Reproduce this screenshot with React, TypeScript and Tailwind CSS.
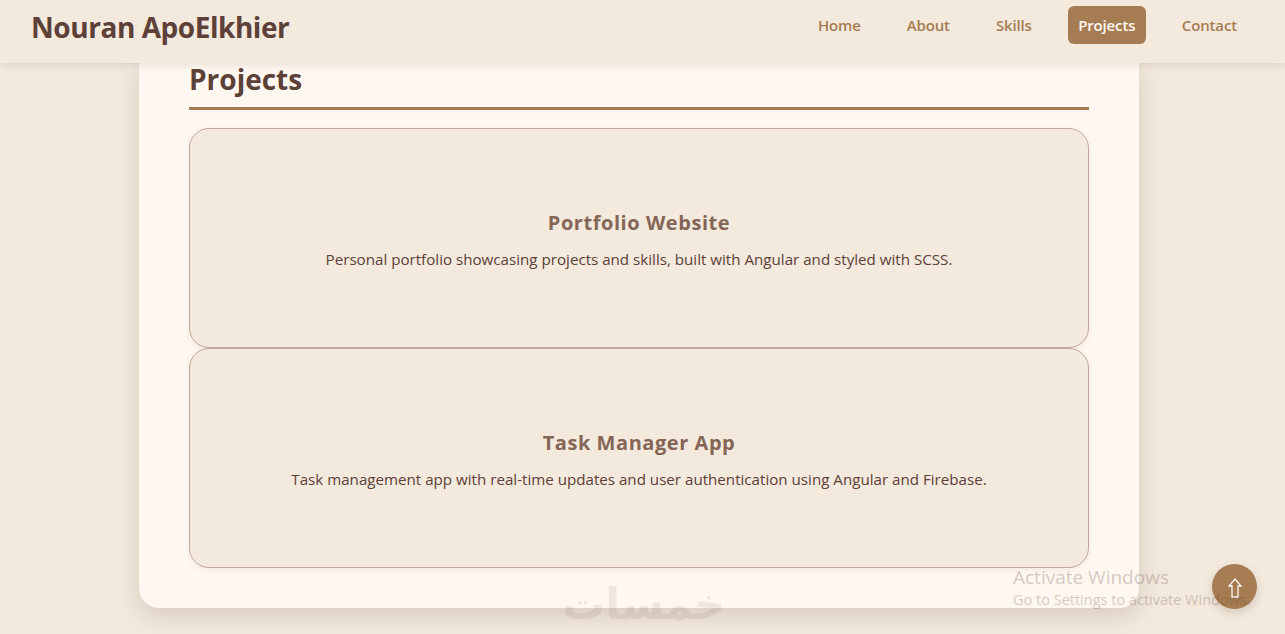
const links = ["Home", "About", "Skills", "Projects", "Contact"];

const projects = [
  {
    title: "Portfolio Website",
    text: "Personal portfolio showcasing projects and skills, built with Angular and styled with SCSS.",
  },
  {
    title: "Task Manager App",
    text: "Task management app with real-time updates and user authentication using Angular and Firebase.",
  },
];

export default function App() {
  return (
    <div className="relative flex h-[634px] flex-col overflow-hidden bg-[#f3e9dd] font-['Open_Sans','Noto_Sans',sans-serif] text-[#5d4037]">
      <nav className="relative z-10 flex h-[63px] shrink-0 items-start justify-between bg-[#f3e9dd] pl-[31px] pr-[38px] shadow-[0_2px_8px_rgba(93,64,55,0.15)]">
        <h1 className="mt-[11px] text-[28px] font-bold leading-[32px] tracking-[-0.45px]">Nouran ApoElkhier</h1>
        <ul className="mt-[6px] flex gap-[26px]">
          {links.map((link) => (
            <li key={link}>
              <a
                className={
                  link === "Projects"
                    ? "block h-[38px] rounded-md bg-[#a67c52] px-[10.5px] text-[15px] font-semibold leading-[38px] tracking-[-0.15px] text-[#fff8f1]"
                    : "block h-[38px] rounded-md px-[10px] text-[15px] font-semibold leading-[38px] tracking-[-0.15px] text-[#a67c52]"
                }
              >
                {link}
              </a>
            </li>
          ))}
        </ul>
      </nav>

      <main className="ml-[139px] h-[545px] w-[1000px] shrink-0 rounded-b-[20px] bg-[#fff8f1] px-[50px] shadow-[0_8px_24px_rgba(93,64,55,0.18)]">
        <h2 className="h-[47px] border-b-[3px] border-[#a67c52] text-[28px] font-bold leading-[32px]">
          Projects
        </h2>
        <div className="mt-[18px] flex flex-col">
          {projects.map((project) => (
            <section
              key={project.title}
              className="flex h-[220px] flex-col items-center justify-center rounded-[20px] border border-[#c4a79b] bg-[#f3e9dd] pt-[4px] shadow-[0_2px_6px_rgba(93,64,55,0.08)]"
            >
              <h3 className="text-[20px] font-bold leading-[28px] tracking-[0.55px] text-[#856656]">{project.title}</h3>
              <p className="mt-[10px] text-[15.15px] leading-[24px]">{project.text}</p>
            </section>
          ))}
        </div>
      </main>

      <div className="absolute left-[562px] top-[574px] z-20 font-['DejaVu_Sans',sans-serif] text-[43px] font-bold leading-[60px] text-[#5d4037] opacity-[0.09]" dir="rtl">
        خمسات
      </div>

      <button className="absolute left-[1212px] top-[564px] flex h-[45px] w-[45px] items-center justify-center rounded-full bg-[#a67c52] text-[#fff8f1] shadow-[0_4px_10px_rgba(93,64,55,0.2)]">
        <svg width="14" height="20" viewBox="0 0 14 20" fill="none" stroke="currentColor" strokeWidth="1.3" className="mt-[3px]">
          <path d="M7 1 L13 8 H10 V19 H4 V8 H1 Z" />
        </svg>
      </button>

      <div className="absolute left-[1013px] top-[565px] z-30 text-[#5d4037] opacity-[0.25]">
        <p className="text-[19px] leading-[24px]">Activate Windows</p>
        <p className="text-[14.5px] leading-[22px]">Go to Settings to activate Windows.</p>
      </div>
    </div>
  );
}
